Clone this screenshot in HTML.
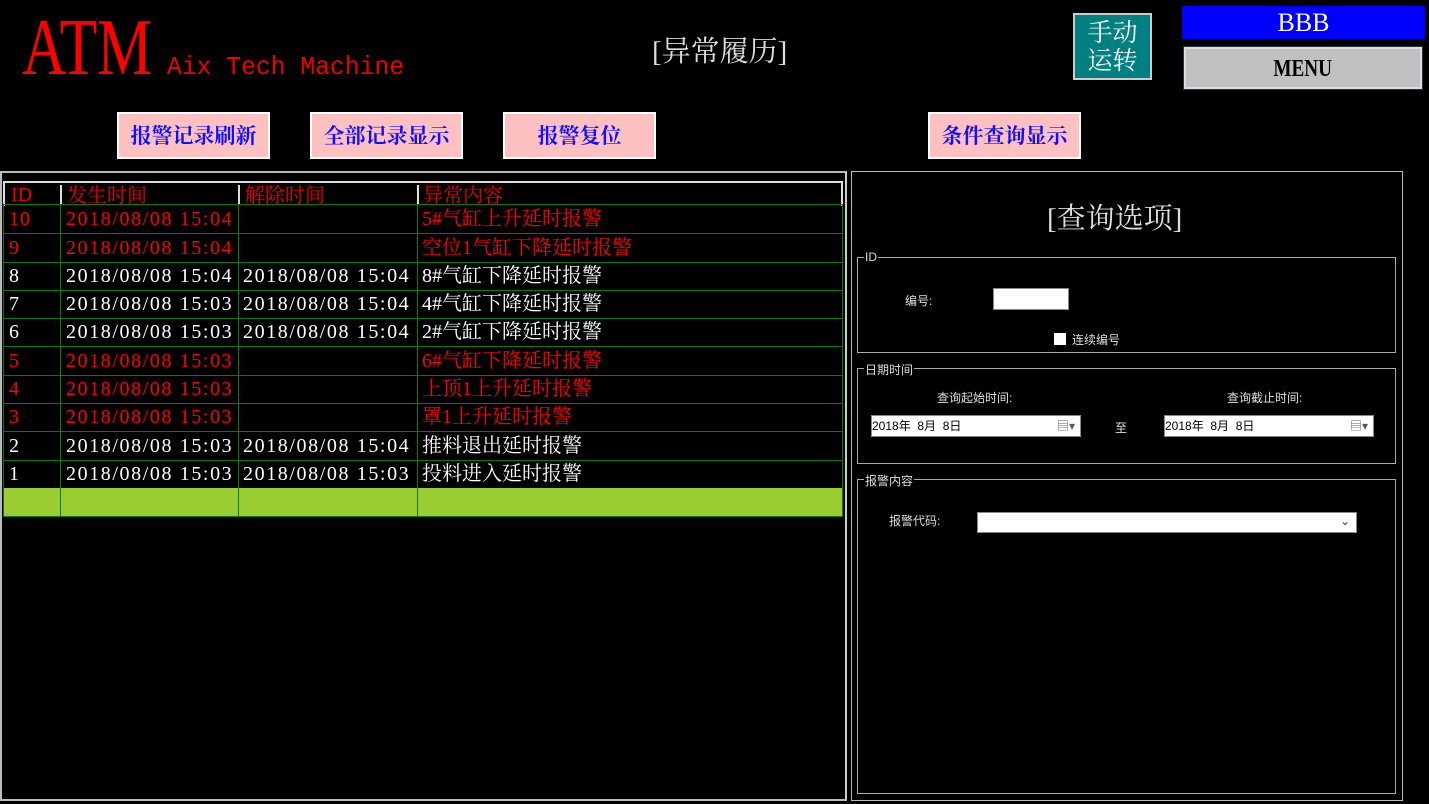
<!DOCTYPE html>
<html><head><meta charset="utf-8"><style>
*{margin:0;padding:0;box-sizing:border-box}
body{width:1429px;height:804px;background:#000;position:relative;overflow:hidden;font-family:"Liberation Serif","Noto Serif CJK SC",serif}
.a{position:absolute;white-space:nowrap}
.btn{position:absolute;top:112px;width:153px;height:47px;background:#ffc0c0;border:2px solid #fff;color:#1010ff;font-weight:bold;font-size:21px;text-align:center;line-height:45px;font-family:"Liberation Serif","Noto Serif CJK SC",serif}
.row{position:absolute;left:3px;width:840px;height:29px;border:1px solid #0a7a0a;border-top:none;font-size:20px;line-height:28px;color:#fff}
.row div{position:absolute;top:0;height:28px;padding-left:5px}
.row .c1{left:0;width:57px;border-right:1px solid #0a7a0a;letter-spacing:1px}
.row .c2{left:57px;width:178px;border-right:1px solid #0a7a0a;letter-spacing:1.6px}
.row .c3{left:235px;width:179px;border-right:1px solid #0a7a0a;letter-spacing:1.6px;padding-left:4px}
.row .c4{left:414px;padding-left:4px}
.r{color:#f00}
.grp{position:absolute;left:857px;width:539px;border:1px solid #aaa}
.lg{position:absolute;top:-8px;left:6px;background:#000;color:#ddd;font-size:12px;font-family:"Liberation Sans","Noto Sans CJK SC",sans-serif;padding:0 1px}
.s{font-family:"Liberation Sans","Noto Sans CJK SC",sans-serif;font-size:12px;color:#ddd}
.date{position:absolute;width:210px;height:22px;background:#fff;border:1px solid #888;color:#000;font-size:12px;line-height:20px;font-family:"Liberation Sans","Noto Sans CJK SC",sans-serif}
</style></head><body>
<div class="a" style="left:22px;top:8px;font-size:80px;color:#f00;line-height:80px;transform:scaleX(0.77);transform-origin:left">ATM</div>
<div class="a" style="left:167px;top:52px;font-size:26px;color:#e00;font-family:'Liberation Mono',monospace;transform:scaleX(0.95);transform-origin:left">Aix Tech Machine</div>
<div class="a" style="left:652px;top:29px;font-size:29px;color:#ddd">[异常履历]</div>
<div class="a" style="left:1073px;top:13px;width:79px;height:67px;background:#008080;border:2px solid #ccc;color:#fff;font-size:25px;line-height:28px;text-align:center;padding-top:5px">手动<br>运转</div>
<div class="a" style="left:1182px;top:6px;width:243px;height:33px;background:#0000ff;color:#fff;font-size:26px;text-align:center;line-height:33px">BBB</div>
<div class="a" style="left:1184px;top:47px;width:238px;height:42px;background:#c0c0c0;border:2px solid #ddd;outline:1px solid #234;color:#000;font-size:24px;text-align:center;line-height:40px;font-weight:bold"><span style="display:inline-block;transform:scaleX(0.8)">MENU</span></div>
<div class="btn" style="left:117px">报警记录刷新</div>
<div class="btn" style="left:310px">全部记录显示</div>
<div class="btn" style="left:503px">报警复位</div>
<div class="btn" style="left:928px">条件查询显示</div>

<div class="a" style="left:0;top:171px;width:847px;height:630px;border:2px solid #bbb;border-right-color:#ccc"></div>
<div class="a" style="left:3px;top:181px;width:840px;height:25px;border:2px solid #ddd;border-bottom:none;color:#e00;font-size:20px;line-height:24px">
<span class="a" style="left:6px">ID</span>
<span class="a" style="left:55px;border-left:2px solid #ddd;padding-left:5px;height:20px;line-height:22px;top:2px">发生时间</span>
<span class="a" style="left:233px;border-left:2px solid #ddd;padding-left:5px;height:20px;line-height:22px;top:2px">解除时间</span>
<span class="a" style="left:412px;border-left:2px solid #ddd;padding-left:4px;height:20px;line-height:22px;top:2px">异常内容</span>
</div>
<div class="a" style="left:3px;top:204px;width:840px;border-top:1px solid #0a7a0a"></div>
<div class="row r" style="top:205px"><div class="c1">10</div><div class="c2">2018/08/08 15:04</div><div class="c3"></div><div class="c4">5#气缸上升延时报警</div></div>
<div class="row r" style="top:234px"><div class="c1">9</div><div class="c2">2018/08/08 15:04</div><div class="c3"></div><div class="c4">空位1气缸下降延时报警</div></div>
<div class="row" style="top:262px"><div class="c1">8</div><div class="c2">2018/08/08 15:04</div><div class="c3">2018/08/08 15:04</div><div class="c4">8#气缸下降延时报警</div></div>
<div class="row" style="top:290px"><div class="c1">7</div><div class="c2">2018/08/08 15:03</div><div class="c3">2018/08/08 15:04</div><div class="c4">4#气缸下降延时报警</div></div>
<div class="row" style="top:318px"><div class="c1">6</div><div class="c2">2018/08/08 15:03</div><div class="c3">2018/08/08 15:04</div><div class="c4">2#气缸下降延时报警</div></div>
<div class="row r" style="top:347px"><div class="c1">5</div><div class="c2">2018/08/08 15:03</div><div class="c3"></div><div class="c4">6#气缸下降延时报警</div></div>
<div class="row r" style="top:375px"><div class="c1">4</div><div class="c2">2018/08/08 15:03</div><div class="c3"></div><div class="c4">上顶1上升延时报警</div></div>
<div class="row r" style="top:403px"><div class="c1">3</div><div class="c2">2018/08/08 15:03</div><div class="c3"></div><div class="c4">罩1上升延时报警</div></div>
<div class="row" style="top:432px"><div class="c1">2</div><div class="c2">2018/08/08 15:03</div><div class="c3">2018/08/08 15:04</div><div class="c4">推料退出延时报警</div></div>
<div class="row" style="top:460px"><div class="c1">1</div><div class="c2">2018/08/08 15:03</div><div class="c3">2018/08/08 15:03</div><div class="c4">投料进入延时报警</div></div>
<div class="row" style="top:488px;background:#9acd32"><div class="c1"></div><div class="c2"></div><div class="c3"></div></div>

<div class="a" style="left:851px;top:171px;width:552px;height:630px;border:1px solid #bbb"></div>
<div class="a" style="left:1047px;top:196px;font-size:29px;color:#ddd">[查询选项]</div>
<div class="grp" style="top:257px;height:96px"><span class="lg">ID</span></div>
<div class="a s" style="left:905px;top:292px">编号:</div>
<div class="a" style="left:993px;top:288px;width:76px;height:22px;background:#fff;border:1px solid #888"></div>
<div class="a" style="left:1054px;top:333px;width:12px;height:12px;background:#fff"></div>
<div class="a s" style="left:1072px;top:331px">连续编号</div>
<div class="grp" style="top:368px;height:96px"><span class="lg">日期时间</span></div>
<div class="a s" style="left:937px;top:389px">查询起始时间:</div>
<div class="a s" style="left:1227px;top:389px">查询截止时间:</div>
<div class="date" style="left:871px;top:415px">2018年&nbsp; 8月&nbsp; 8日<span class="a" style="right:5px;top:0;color:#557">▤▾</span></div>
<div class="a s" style="left:1115px;top:419px">至</div>
<div class="date" style="left:1164px;top:415px">2018年&nbsp; 8月&nbsp; 8日<span class="a" style="right:5px;top:0;color:#557">▤▾</span></div>
<div class="grp" style="top:479px;height:315px"><span class="lg">报警内容</span></div>
<div class="a s" style="left:889px;top:512px">报警代码:</div>
<div class="a" style="left:977px;top:512px;width:380px;height:21px;background:#fff;border:1px solid #888"><span class="a" style="right:6px;top:1px;font-size:12px;color:#444">⌄</span></div>
</body></html>
